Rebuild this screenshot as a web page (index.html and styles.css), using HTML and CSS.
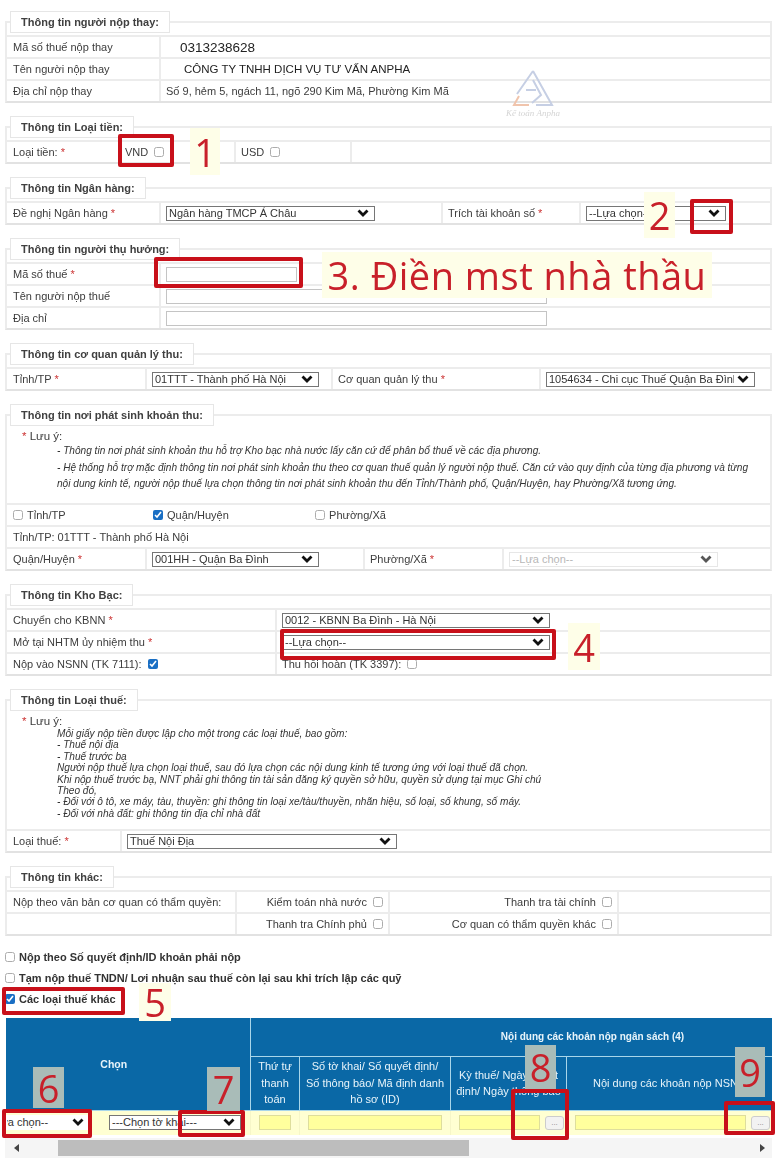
FILE: index.html
```html
<!DOCTYPE html>
<html lang="vi">
<head>
    <meta charset="UTF-8">
    <meta name="viewport" content="width=device-width, initial-scale=1.0">
    <title>Nộp thuế thay</title>
    <link rel="stylesheet" href="styles.css">
</head>
<body>
    <div class="page">
        <fieldset>
            <legend>Thông tin người nộp thay:</legend>
            <div class="row cols-label">
                <div class="cell">Mã số thuế nộp thay</div>
                <div class="cell"><span class="tax-code">0313238628</span></div>
            </div>
            <div class="row cols-label">
                <div class="cell">Tên người nộp thay</div>
                <div class="cell"><span class="company">CÔNG TY TNHH DỊCH VỤ TƯ VẤN ANPHA</span></div>
            </div>
            <div class="row cols-label">
                <div class="cell">Địa chỉ nộp thay</div>
                <div class="cell">Số 9, hẻm 5, ngách 11, ngõ 290 Kim Mã, Phường Kim Mã</div>
            </div>
        </fieldset>

        <fieldset>
            <legend>Thông tin Loại tiền:</legend>
            <div class="row cols-money">
                <div class="cell">Loại tiền: <span class="req">*</span></div>
                <div class="cell">VND <input type="checkbox"></div>
                <div class="cell">USD <input type="checkbox"></div>
                <div class="cell"></div>
            </div>
        </fieldset>

        <fieldset>
            <legend>Thông tin Ngân hàng:</legend>
            <div class="row cols-bank">
                <div class="cell">Đề nghị Ngân hàng <span class="req">*</span></div>
                <div class="cell"><select class="sel-209"><option>Ngân hàng TMCP Á Châu</option></select></div>
                <div class="cell">Trích tài khoản số <span class="req">*</span></div>
                <div class="cell"><select class="sel-140"><option>--Lựa chọn--</option></select></div>
            </div>
        </fieldset>

        <fieldset>
            <legend>Thông tin người thụ hưởng:</legend>
            <div class="row cols-label">
                <div class="cell">Mã số thuế <span class="req">*</span></div>
                <div class="cell"><input type="text" class="text-short"></div>
            </div>
            <div class="row cols-label">
                <div class="cell">Tên người nộp thuế</div>
                <div class="cell"><input type="text" class="text-long"></div>
            </div>
            <div class="row cols-label">
                <div class="cell">Địa chỉ</div>
                <div class="cell"><input type="text" class="text-long"></div>
            </div>
        </fieldset>

        <fieldset>
            <legend>Thông tin cơ quan quản lý thu:</legend>
            <div class="row cols-agency">
                <div class="cell">Tỉnh/TP <span class="req">*</span></div>
                <div class="cell"><select class="sel-167"><option>01TTT - Thành phố Hà Nội</option></select></div>
                <div class="cell">Cơ quan quản lý thu <span class="req">*</span></div>
                <div class="cell"><select class="sel-209"><option>1054634 - Chi cục Thuế Quận Ba Đình</option></select></div>
            </div>
        </fieldset>

        <fieldset>
            <legend>Thông tin nơi phát sinh khoản thu:</legend>
            <div class="note note-wide">
                <div class="note-head"><span class="req">*</span> Lưu ý:</div>
                <div class="note-body">
                    <p>- Thông tin nơi phát sinh khoản thu hỗ trợ Kho bạc nhà nước lấy căn cứ để phân bổ thuế về các địa phương.</p>
                    <p>- Hệ thống hỗ trợ mặc định thông tin nơi phát sinh khoản thu theo cơ quan thuế quản lý người nộp thuế. Căn cứ vào quy định của từng địa phương và từng nội dung kinh tế, người nộp thuế lựa chọn thông tin nơi phát sinh khoản thu đến Tỉnh/Thành phố, Quận/Huyện, hay Phường/Xã tương ứng.</p>
                </div>
            </div>
            <div class="row cols-place">
                <label class="cell plain"><input type="checkbox"> Tỉnh/TP</label>
                <label class="cell plain"><input type="checkbox" checked> Quận/Huyện</label>
                <label class="cell plain"><input type="checkbox"> Phường/Xã</label>
            </div>
            <div class="row cols-single">
                <div class="cell">Tỉnh/TP: 01TTT - Thành phố Hà Nội</div>
            </div>
            <div class="row cols-district">
                <div class="cell">Quận/Huyện <span class="req">*</span></div>
                <div class="cell"><select class="sel-167"><option>001HH - Quận Ba Đình</option></select></div>
                <div class="cell">Phường/Xã <span class="req">*</span></div>
                <div class="cell"><select class="sel-209" disabled><option>--Lựa chọn--</option></select></div>
            </div>
        </fieldset>

        <fieldset>
            <legend>Thông tin Kho Bạc:</legend>
            <div class="row cols-treasury">
                <div class="cell">Chuyển cho KBNN <span class="req">*</span></div>
                <div class="cell"><select class="sel-268"><option>0012 - KBNN Ba Đình - Hà Nội</option></select></div>
            </div>
            <div class="row cols-treasury">
                <div class="cell">Mở tại NHTM ủy nhiệm thu <span class="req">*</span></div>
                <div class="cell"><select class="sel-268"><option>--Lựa chọn--</option></select></div>
            </div>
            <div class="row cols-treasury">
                <div class="cell">Nộp vào NSNN (TK 7111): <input type="checkbox" checked></div>
                <div class="cell">Thu hồi hoàn (TK 3397): <input type="checkbox"></div>
            </div>
        </fieldset>

        <fieldset>
            <legend>Thông tin Loại thuế:</legend>
            <div class="note note-tall">
                <div class="note-head"><span class="req">*</span> Lưu ý:</div>
                <div class="note-body">
                    Mỗi giấy nộp tiền được lập cho một trong các loại thuế, bao gồm:<br>
                    - Thuế nội địa<br>
                    - Thuế trước bạ<br>
                    Người nộp thuế lựa chọn loại thuế, sau đó lựa chọn các nội dung kinh tế tương ứng với loại thuế đã chọn.<br>
                    Khi nộp thuế trước bạ, NNT phải ghi thông tin tài sản đăng ký quyền sở hữu, quyền sử dụng tại mục Ghi chú<br>
                    Theo đó,<br>
                    - Đối với ô tô, xe máy, tàu, thuyền: ghi thông tin loại xe/tàu/thuyền, nhãn hiệu, số loại, số khung, số máy.<br>
                    - Đối với nhà đất: ghi thông tin địa chỉ nhà đất
                </div>
            </div>
            <div class="row cols-taxtype">
                <div class="cell">Loại thuế: <span class="req">*</span></div>
                <div class="cell"><select class="sel-270"><option>Thuế Nội Địa</option></select></div>
            </div>
        </fieldset>

        <fieldset>
            <legend>Thông tin khác:</legend>
            <div class="row cols-other">
                <div class="cell">Nộp theo văn bản cơ quan có thẩm quyền:</div>
                <div class="cell right">Kiểm toán nhà nước <input type="checkbox"></div>
                <div class="cell right">Thanh tra tài chính <input type="checkbox"></div>
                <div class="cell"></div>
            </div>
            <div class="row cols-other">
                <div class="cell"></div>
                <div class="cell right">Thanh tra Chính phủ <input type="checkbox"></div>
                <div class="cell right">Cơ quan có thẩm quyền khác <input type="checkbox"></div>
                <div class="cell"></div>
            </div>
        </fieldset>

        <div class="checks">
            <label><input type="checkbox"> Nộp theo Số quyết định/ID khoản phải nộp</label>
            <label><input type="checkbox"> Tạm nộp thuế TNDN/ Lợi nhuận sau thuế còn lại sau khi trích lập các quỹ</label>
            <label><input type="checkbox" checked> Các loại thuế khác</label>
        </div>

        <table class="budget">
            <colgroup>
                <col class="c-choose">
                <col class="c-order">
                <col class="c-decl">
                <col class="c-period">
                <col class="c-content">
            </colgroup>
            <thead>
                <tr class="head-top">
                    <th rowspan="2" class="th-choose">Chọn</th>
                    <th colspan="4" class="th-group">Nội dung các khoản nộp ngân sách (4)</th>
                </tr>
                <tr class="head-sub">
                    <th>Thứ tự thanh toán</th>
                    <th>Số tờ khai/ Số quyết định/<br>Số thông báo/ Mã định danh<br>hồ sơ (ID)</th>
                    <th>Kỳ thuế/ Ngày quyết định/ Ngày thông báo</th>
                    <th>Nội dung các khoản nộp NSNN</th>
                </tr>
            </thead>
            <tbody>
                <tr>
                    <td class="td-choose">
                        <select class="sel-type"><option>--Lựa chọn--</option></select>
                        <select class="sel-form"><option>---Chọn tờ khai---</option></select>
                    </td>
                    <td><input type="text" class="yellow fill"></td>
                    <td><input type="text" class="yellow fill"></td>
                    <td><div class="with-btn"><input type="text" class="yellow"><button class="dots">...</button></div></td>
                    <td><div class="with-btn"><input type="text" class="yellow"><button class="dots">...</button></div></td>
                </tr>
            </tbody>
        </table>

        <div class="hscroll">
            <span class="arrow-left"></span>
            <span class="thumb"></span>
            <span class="arrow-right"></span>
        </div>

        <!-- watermark -->
        <div class="watermark">
            <svg width="42" height="36" viewBox="0 0 42 36" fill="none">
                <path d="M21 1 L40 35 H24 M21 1 L5 24" stroke="#c6cfe4" stroke-width="2"/>
                <path d="M21 10 L29 25 L20 33" stroke="#c6cfe4" stroke-width="2"/>
                <path d="M14 20 L24 20" stroke="#c6cfe4" stroke-width="2"/>
                <path d="M7 26 L2 35 H17" stroke="#f0c4ac" stroke-width="2"/>
            </svg>
            <div class="wm-text">Kế toán Anpha</div>
        </div>

        <!-- annotations drawn over the form -->
        <div class="mark box-vnd"></div>
        <div class="num num-1">1</div>
        <div class="mark box-acct"></div>
        <div class="num num-2">2</div>
        <div class="mark box-mst"></div>
        <div class="num num-3">3. Điền mst nhà thầu</div>
        <div class="mark box-nhtm"></div>
        <div class="num num-4">4</div>
        <div class="mark box-other"></div>
        <div class="num num-5">5</div>
        <div class="mark box-type"></div>
        <div class="num grey num-6">6</div>
        <div class="mark box-form"></div>
        <div class="num grey num-7">7</div>
        <div class="mark box-date"></div>
        <div class="num grey num-8">8</div>
        <div class="mark box-nsnn"></div>
        <div class="num grey num-9">9</div>
    </div>
</body>
</html>
```

FILE: styles.css
```css
body {
    margin: 0;
    background-color: #fff;
    font-family: "Liberation Sans", Arial, sans-serif;
    font-size: 11px;
    color: #3c3c3c;
}
.page {
    position: relative;
    height: 1160px;
    overflow: hidden;
    box-sizing: border-box;
    padding: 11px 3px 0 5px;
    filter: blur(0.35px);
}
fieldset {
    margin: 0 0 13px;
    padding: 2px 0 0;
    min-width: 0;
    border: 2px solid #ececec;
    border-bottom-color: #e2e2e2;
}
legend {
    margin-left: 3px;
    padding: 0 10px;
    height: 22px;
    box-sizing: border-box;
    line-height: 20px;
    border: 1px solid #e6e6e6;
    background-color: #fff;
    font-weight: bold;
    font-size: 11px;
    color: #404040;
}
.row {
    display: grid;
    height: 22px;
    box-sizing: border-box;
    border-top: 2px solid #ececec;
}
.cols-label { grid-template-columns: 152px 1fr; }
.cols-money { grid-template-columns: 111px 116px 116px 1fr; }
.cols-bank { grid-template-columns: 152px 282px 138px 1fr; }
.cols-agency { grid-template-columns: 138px 186px 208px 1fr; }
.cols-place { grid-template-columns: 140px 162px 1fr; }
.cols-single { grid-template-columns: 1fr; }
.cols-district { grid-template-columns: 138px 218px 139px 1fr; }
.cols-treasury { grid-template-columns: 268px 1fr; }
.cols-taxtype { grid-template-columns: 113px 1fr; }
.cols-other { grid-template-columns: 228px 153px 229px 1fr; }
.cell {
    display: flex;
    align-items: center;
    padding: 0 5px;
    white-space: pre-wrap;
    border-left: 2px solid #ececec;
    min-width: 0;
}
.cell:first-child {
    padding-left: 6px;
    border-left: none;
}
.cell.plain {
    border-left: none;
    padding-left: 6px;
}
.right { justify-content: flex-end; }
.tax-code {
    padding-left: 14px;
    font-size: 13.500px;
    color: #222;
}
.company {
    padding-left: 18px;
    font-size: 11.500px;
    color: #222;
}
.req { color: #c33; }

input[type="checkbox"] {
    width: 10px;
    height: 10px;
    margin: 0 0 0 3px;
    accent-color: #1a6fc4;
}
input[type="checkbox"]:not(:checked) { opacity: 0.6; }
.cell.plain input { margin: 0 1px 0 0; }

select {
    appearance: none;
    height: 15px;
    box-sizing: border-box;
    padding: 0 20px 0 2px;
    border: 1px solid #767676;
    border-radius: 0;
    background: #fff url("data:image/svg+xml;utf8,<svg xmlns='http://www.w3.org/2000/svg' width='12' height='8'><path d='M1.5 1.5 L6 6 L10.500 1.5' fill='none' stroke='%23111' stroke-width='2.800'/></svg>") no-repeat right 5px center;
    font-family: inherit;
    font-size: 11px;
    color: #333;
}
select:disabled {
    border-color: #ddd;
    color: #999;
}
.sel-140 { width: 140px; }
.sel-167 { width: 167px; }
.sel-209 { width: 209px; }
.sel-268 { width: 268px; }
.sel-270 { width: 270px; }

input[type="text"] {
    height: 15px;
    box-sizing: border-box;
    padding: 0 2px;
    border: 1px solid #c4c4c4;
    background-color: #fff;
}
.text-short { width: 131px; }
.text-long { width: 381px; }

.note {
    padding: 1px 0 0 15px;
    box-sizing: border-box;
}
.note-wide { height: 75px; }
.note-tall { height: 116px; }
.note-head {
    line-height: 14px;
    font-size: 11.500px;
}
.note-body {
    margin-left: 35px;
    font-size: 10.100px;
    font-style: italic;
    color: #333;
}
.note-body p {
    margin: 0;
    line-height: 16.500px;
}
.note-wide .note-body { padding-right: 16px; }
.note-tall .note-body { line-height: 11.400px; }

.checks {
    margin: -3px 0 9px;
}
.checks label {
    display: flex;
    align-items: center;
    height: 21px;
    font-weight: bold;
    font-size: 11px;
    color: #333;
}
.checks input[type="checkbox"] { margin: 0 4px 0 0; }

.budget {
    width: 767px;
    table-layout: fixed;
    border-collapse: collapse;
}
.c-choose { width: 245px; }
.c-order { width: 49px; }
.c-decl { width: 151px; }
.c-period { width: 116px; }
.budget th {
    background-color: #0a68a6;
    color: #e8f4fa;
    font-size: 11px;
    font-weight: normal;
    line-height: 16.500px;
    padding: 0 2px;
    border: 1px solid #a9d6ea;
}
.budget th.th-choose {
    padding-right: 30px;
    border-left: none;
    border-top: none;
    font-weight: bold;
    font-size: 10.500px;
    vertical-align: middle;
}
.budget th.th-group {
    padding-left: 164px;
    border-right: none;
    border-top: none;
    font-weight: bold;
    font-size: 10px;
}
.budget .head-sub th:last-child { border-right: none; }
.head-top { height: 38px; }
.head-sub { height: 54px; }
.budget td {
    height: 24px;
    padding: 0;
    background-color: #ffffd2;
    text-align: center;
    border-left: 1px solid #f6f6c8;
}
.td-choose { position: relative; }
.sel-type {
    position: absolute;
    left: -2px;
    top: 4px;
    width: 86px;
    text-indent: -20px;
    border-color: #fff;
}
.sel-form {
    position: absolute;
    left: 103px;
    top: 4px;
    width: 132px;
}
input.yellow {
    background-color: #ffff9d;
    border-color: #dede9c;
}
.fill { width: calc(100% - 16px); }
.with-btn {
    display: flex;
    align-items: center;
    gap: 5px;
    padding: 0 2px 0 8px;
}
.with-btn input { flex: 1; width: 0; }
.dots {
    width: 19px;
    height: 14px;
    padding: 0;
    border: 1px solid #ccc;
    border-radius: 3px;
    background-color: #f2f2f2;
    font-size: 8px;
    line-height: 8px;
    color: #888;
}

.hscroll {
    position: relative;
    height: 20px;
    margin-top: 3px;
    background-color: #f5f5f5;
}
.thumb {
    position: absolute;
    left: 53px;
    top: 2px;
    width: 411px;
    height: 16px;
    background-color: #bdbdbd;
}
.arrow-left {
    position: absolute;
    left: 9px;
    top: 6px;
    border: 4px solid transparent;
    border-right: 5px solid #444;
    border-left: none;
}
.arrow-right {
    position: absolute;
    right: 7px;
    top: 6px;
    border: 4px solid transparent;
    border-left: 5px solid #444;
    border-right: none;
}

.watermark {
    position: absolute;
    left: 502px;
    top: 70px;
    width: 62px;
    text-align: center;
}
.wm-text {
    font-family: "Liberation Serif", serif;
    font-style: italic;
    font-size: 9px;
    color: #d4d4d4;
    white-space: nowrap;
}

/* red frames */
.mark {
    position: absolute;
    box-sizing: border-box;
    border: 4px solid #c8101a;
    border-radius: 2px;
}
.box-vnd { left: 118px; top: 134px; width: 56px; height: 33px; }
.box-acct { left: 690px; top: 199px; width: 43px; height: 35px; }
.box-mst { left: 154px; top: 257px; width: 149px; height: 31px; }
.box-nhtm { left: 280px; top: 629px; width: 276px; height: 31px; }
.box-other { left: 2px; top: 987px; width: 123px; height: 28px; }
.box-type { left: 2px; top: 1109px; width: 90px; height: 29px; }
.box-form { left: 178px; top: 1110px; width: 67px; height: 27px; }
.box-date { left: 511px; top: 1089px; width: 58px; height: 51px; }
.box-nsnn { left: 724px; top: 1101px; width: 51px; height: 34px; }

/* numbers */
.num {
    position: absolute;
    box-sizing: border-box;
    display: flex;
    align-items: center;
    justify-content: center;
    font-family: "Open Sans", sans-serif;
    font-size: 38px;
    color: #c8202a;
    background-color: #fefee8;
}
.num.grey { background-color: #a9bcb8; }
.num-1 { left: 190px; top: 128px; width: 30px; height: 47px; }
.num-2 { left: 644px; top: 192px; width: 31px; height: 46px; }
.num-3 {
    left: 322px;
    top: 252px;
    width: 390px;
    height: 46px;
    white-space: nowrap;
    letter-spacing: 0.500px;
}
.num-4 { left: 568px; top: 623px; width: 32px; height: 47px; }
.num-5 { left: 139px; top: 983px; width: 32px; height: 38px; }
.num-6 { left: 33px; top: 1067px; width: 31px; height: 41px; }
.num-7 { left: 207px; top: 1067px; width: 33px; height: 44px; }
.num-8 { left: 525px; top: 1045px; width: 31px; height: 44px; }
.num-9 { left: 735px; top: 1047px; width: 30px; height: 50px; }
```
